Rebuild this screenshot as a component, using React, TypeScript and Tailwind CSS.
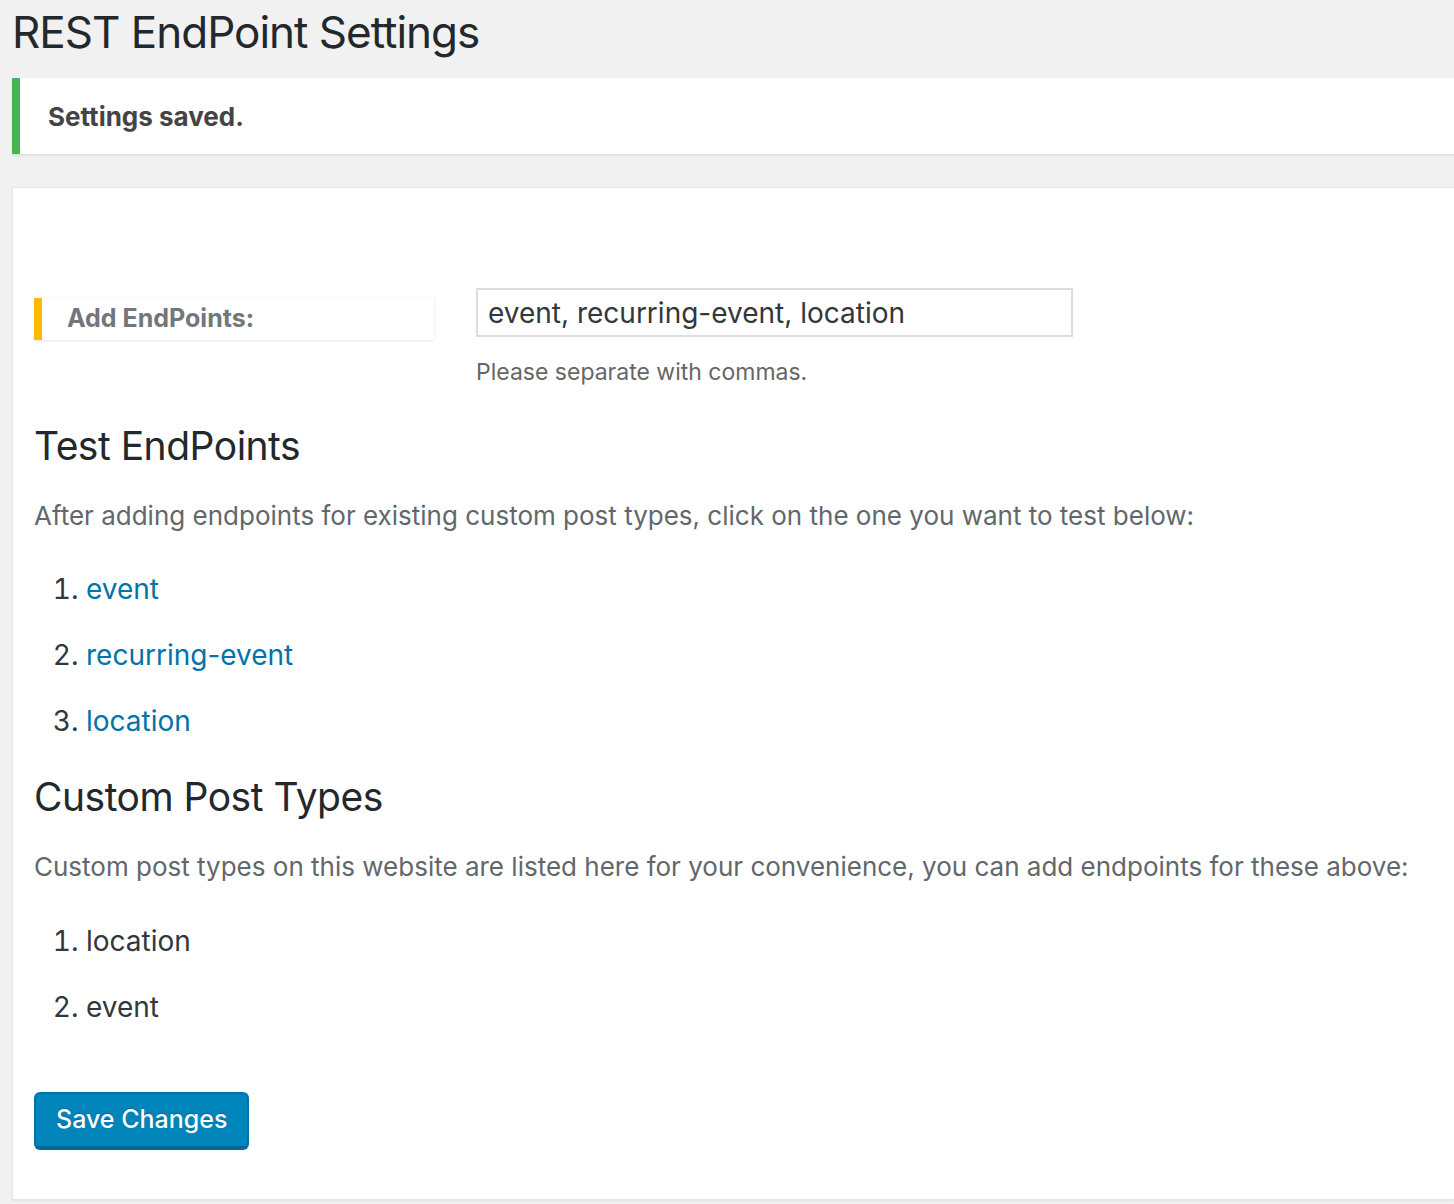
import React from "react";

const testEndpoints = ["event", "recurring-event", "location"];
const postTypes = ["location", "event"];

export default function App() {
  return (
    <div
      className="min-h-screen bg-[#f1f1f1] pl-[12px] pb-[8px]"
      style={{ fontFamily: "Inter, 'Noto Sans', sans-serif" }}
    >
      {/* Page title */}
      <h1 className="pt-[6px] text-[44px] leading-[52px] text-[#23282d] tracking-[-1px]">
        REST EndPoint Settings
      </h1>

      {/* Notice */}
      <div className="mt-[20px] h-[76px] flex items-center bg-white border-l-[8px] border-[#46b450] shadow-[0_2px_2px_rgba(0,0,0,0.08)] pl-[28px]">
        <p className="text-[26px] font-bold text-[#444]">Settings saved.</p>
      </div>

      {/* Settings card */}
      <div className="mt-[33px] bg-white border-y border-l border-[#e5e5e5] shadow-[0_1px_2px_rgba(0,0,0,0.06)] pl-[21px] pt-[100px] pb-[49px]">
        <div className="flex items-start">
          <div className="mt-[10px] w-[400px] h-[42px] flex items-center bg-white border-l-[8px] border-[#ffb900] shadow-[0_1px_3px_rgba(0,0,0,0.1)] pl-[25px]">
            <span className="text-[25px] font-bold text-[#72777c]">Add EndPoints:</span>
          </div>
          <div className="ml-[42px]">
            <input
              readOnly
              value="event, recurring-event, location"
              className="w-[597px] h-[49px] border-2 border-[#ddd] px-[10px] text-[28px] text-[#32373c] outline-none"
              style={{ fontFamily: "Inter, sans-serif" }}
            />
            <p className="mt-[18px] text-[23px] text-[#666]">Please separate with commas.</p>
          </div>
        </div>

        <h2 className="mt-[30px] text-[39px] leading-[52px] text-[#23282d] tracking-[-0.5px]">Test EndPoints</h2>
        <p className="mt-[24px] text-[26px] text-[#62676c]">
          After adding endpoints for existing custom post types, click on the one you want to test below:
        </p>
        <ol className="mt-[34px] pl-[52px] list-decimal text-[28px] text-[#32373c]">
          {testEndpoints.map((e) => (
            <li key={e} className="h-[66px] leading-[40px]">
              <a href="#" className="text-[#0073aa]">{e}</a>
            </li>
          ))}
        </ol>

        <h2 className="mt-[4px] text-[39px] leading-[52px] text-[#23282d] tracking-[-0.5px]">Custom Post Types</h2>
        <p className="mt-[24px] text-[26px] text-[#62676c]">
          Custom post types on this website are listed here for your convenience, you can add endpoints for these above:
        </p>
        <ol className="mt-[35px] pl-[52px] list-decimal text-[28px] text-[#32373c]">
          {postTypes.map((e) => (
            <li key={e} className="h-[66px] leading-[40px]">{e}</li>
          ))}
        </ol>

        <button className="mt-[39px] h-[58px] px-[20px] rounded-[6px] bg-[#0085ba] border-2 border-[#0073aa] border-b-[4px] border-b-[#006799] text-white text-[25px] font-medium [text-shadow:0_-1px_1px_#006799]">
          Save Changes
        </button>
      </div>
    </div>
  );
}
